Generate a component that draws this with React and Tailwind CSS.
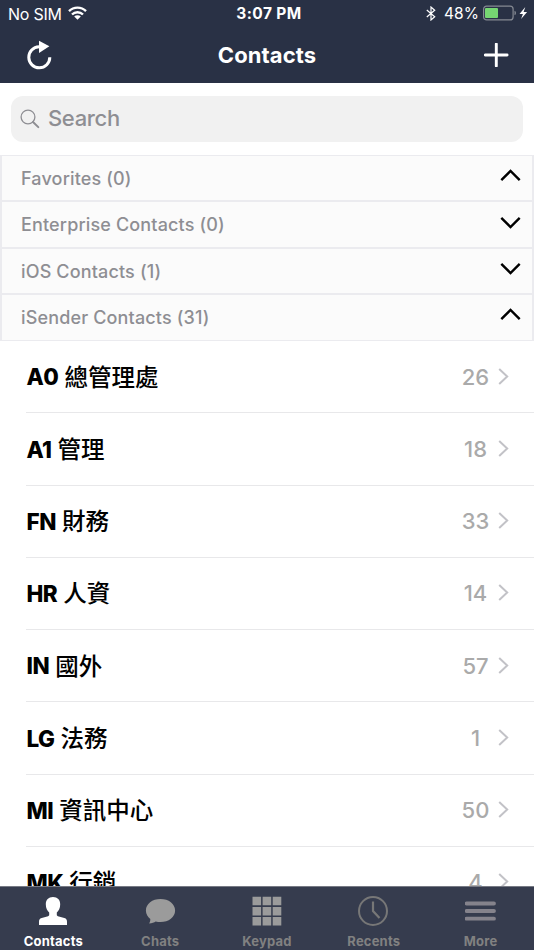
import React, { useState } from "react";

const sections = [
  { name: "Favorites", total: 0, open: true },
  { name: "Enterprise Contacts", total: 0, open: false },
  { name: "iOS Contacts", total: 1, open: false },
  { name: "iSender Contacts", total: 31, open: true },
];

const departments = [
  { code: "A0", name: "總管理處", count: 26 },
  { code: "A1", name: "管理", count: 18 },
  { code: "FN", name: "財務", count: 33 },
  { code: "HR", name: "人資", count: 14 },
  { code: "IN", name: "國外", count: 57 },
  { code: "LG", name: "法務", count: 1 },
  { code: "MI", name: "資訊中心", count: 50 },
  { code: "MK", name: "行銷", count: 4 },
];

const StatusBar = () => (
  <div className="h-7 grid grid-cols-3 items-center text-white text-[16px] leading-7">
    <div className="flex items-center pl-2 -mt-[1px]">
      <span className="w-[54px] whitespace-nowrap tracking-[-0.25px]">No SIM</span>
      <svg width="19" height="14" viewBox="0 0 19 14" className="ml-[6px] -mt-[1px]">
        <g fill="none" stroke="white" strokeWidth="2.4">
          <path d="M1 5.2a12 12 0 0 1 17 0" />
          <path d="M4 8.5a7.8 7.8 0 0 1 11 0" />
        </g>
        <path d="M9.5 13.8 6.2 10.6a4.5 4.5 0 0 1 6.6 0z" fill="white" />
      </svg>
    </div>
    <div className="text-center font-bold tracking-[0.4px] text-[15.5px] pl-[4px]">3:07 PM</div>
    <div className="flex items-center justify-end pr-[6px]">
      <svg width="10" height="15" viewBox="0 0 10 15" className="mr-[8px] -mt-[1px]">
        <path d="M.8 4 8.7 10.8 5 14V1l3.7 3.2L.8 11" fill="none" stroke="white" strokeWidth="1.2" />
      </svg>
      <span className="text-[15.5px] tracking-[0.1px]">48%</span>
      <svg width="45" height="16" viewBox="0 0 45 16" className="ml-[4px] -mt-[2px]">
        <rect x=".6" y="1.1" width="29.5" height="13.8" rx="3" fill="none" stroke="#858992" strokeWidth="1.2" />
        <rect x="2" y="3" width="13" height="10" rx="1" fill="#76d672" />
        <path d="M31.5 5.7q1.5.6 1.5 2.3T31.5 10.3z" fill="#858992" />
        <path d="M42.3 2 36.5 8.9h3.4l-1.8 5.1 6-7h-3.5z" fill="white" />
      </svg>
    </div>
  </div>
);

const NavBar = () => (
  <div className="h-[55px] flex items-center justify-between pl-[26px] pr-[25px] text-white">
    <svg width="27" height="30" viewBox="0 0 27 30" className="-mt-[2px]" aria-label="Refresh">
      <path d="M13 6.8A10.5 10.5 0 1 0 23.8 17.3" fill="none" stroke="white" strokeWidth="3" />
      <path d="M13 .8 23.4 6.3 13 13z" fill="white" />
    </svg>
    <h1 className="text-[22px] font-bold tracking-[0.1px] mr-[3px]">Contacts</h1>
    <svg width="25" height="24" viewBox="0 0 25 24" className="-mt-[2px]" aria-label="Add">
      <path d="M1.3 12h21.8M12.3 1v22" stroke="white" strokeWidth="2.9" strokeLinecap="round" />
    </svg>
  </div>
);

const SearchBox = () => (
  <div className="h-[72px] px-[11px] pt-[13px]">
    <div className="h-[46px] flex items-center rounded-[12px] bg-[#f1f1f1] pl-[9px] text-[#8e8e93]">
      <svg width="20" height="20" viewBox="0 0 20 20">
        <circle cx="8" cy="8" r="6.9" fill="none" stroke="currentColor" strokeWidth="1.3" />
        <path d="m13 13 5.3 5.1" stroke="currentColor" strokeWidth="2" strokeLinecap="round" />
      </svg>
      <span className="ml-2 mb-[1px] text-[22px] font-medium tracking-[-0.35px]">Search</span>
    </div>
  </div>
);

const SectionHeader = ({ section, onToggle }) => (
  <button
    onClick={onToggle}
    className="w-full h-[46.4px] flex items-center justify-between border-x-2 border-y border-[#ebebef] bg-[#fbfbfb] pl-[19px] pr-[11px] cursor-pointer"
  >
    <span className="text-[18px] font-medium text-[#8e8e93] tracking-[0.15px] pt-[0.5px]">
      {section.name} ({section.total})
    </span>
    <svg width="21" height="13" viewBox="0 0 21 13" className="mb-[5px]">
      <path
        d={section.open ? "M1.3 11.2 10.5 2l9.2 9.2" : "M1.3 1.8 10.5 11l9.2-9.2"}
        fill="none"
        stroke="black"
        strokeWidth="2.4"
      />
    </svg>
  </button>
);

const DepartmentRow = ({ department }) => (
  <li className="ml-[26px] h-[72.25px] flex items-center border-b border-[#e8e8ea]">
    <span className="pl-[0.5px] pt-[1px] text-[22.5px] font-extrabold tracking-[-0.5px]">{department.code}</span>
    <span className="-mt-[1px] ml-[6px] text-[23.5px] font-medium font-['Noto_Sans_CJK_TC',sans-serif]">
      {department.name}
    </span>
    <span className="ml-auto mt-[1px] w-[40px] text-center text-[22px] font-medium text-[#aaaaaa]">
      {department.count}
    </span>
    <svg width="11" height="17" viewBox="0 0 11 17" className="ml-[2px] mr-[25.5px] mb-[1px]">
      <path d="m1.2 1 8 7.5-8 7.5" fill="none" stroke="#c2c2c7" strokeWidth="2" />
    </svg>
  </li>
);

const tabs = [
  {
    name: "Contacts",
    icon: (
      <path
        d="M16 2c4.5 0 7.2 3 7.2 7.3 0 3.8-1.5 6.6-3.4 8.2v2.2c0 1 .7 1.3 2 1.7l5.5 1.7c2.2.7 2.7 1.8 2.7 3.7V30H2v-3.2c0-1.9.5-3 2.7-3.7l5.5-1.7c1.3-.4 2-.7 2-1.7v-2.2c-1.9-1.6-3.4-4.4-3.4-8.2C8.8 5 11.5 2 16 2z"
        fill="#ffffff"
      />
    ),
  },
  {
    name: "Chats",
    icon: (
      <path
        d="M16.5 4c8.2 0 14.6 4.8 14.6 11.5S24.7 27 16.5 27c-1.7 0-3.3-.2-4.8-.6-1.5.9-3.7 1.9-6.6 2.2.8-1.5 1.3-2.9 1.2-4.7C3.7 21.8 1.9 18.9 1.9 15.5 1.9 8.8 8.3 4 16.5 4z"
        fill="#9b9b9b"
      />
    ),
  },
  {
    name: "Keypad",
    icon: (
      <path
        d="M1.5 1.7h8.6v8.6H1.5zM11.6 1.7h8.6v8.6h-8.6zM21.7 1.7h8.6v8.6h-8.6zM1.5 11.9h8.6v8.6H1.5zM11.6 11.9h8.6v8.6h-8.6zM21.7 11.9h8.6v8.6h-8.6zM1.5 22h8.6v8.6H1.5zM11.6 22h8.6v8.6h-8.6zM21.7 22h8.6v8.6h-8.6z"
        fill="#9b9b9b"
      />
    ),
  },
  {
    name: "Recents",
    icon: (
      <g fill="none" stroke="#777777">
        <circle cx="15" cy="16" r="14" strokeWidth="2" />
        <path d="M15 6.5V16l6.5 7" strokeWidth="2.2" />
      </g>
    ),
  },
  {
    name: "More",
    icon: <path d="M1.500 8.5h27.5M1.500 16h27.5M1.500 23.7h27.5" stroke="#85838c" strokeWidth="3.8" strokeLinecap="round" />,
  },
];

const TabBar = ({ active, onSelect }) => (
  <nav className="h-16 shrink-0 grid grid-cols-5 bg-[#363c4e] border-t border-[#777a84]">
    {tabs.map((tab) => (
      <button
        key={tab.name}
        onClick={() => onSelect(tab.name)}
        className={`flex flex-col items-center pt-2 cursor-pointer ${
          active === tab.name ? "text-white" : "text-[#818181]"
        }`}
      >
        <svg width="32" height="32" viewBox="0 0 32 32">
          {tab.icon}
        </svg>
        <span className="mt-[6px] text-[13px] leading-4 font-bold tracking-[0.2px]">{tab.name}</span>
      </button>
    ))}
  </nav>
);

const App = () => {
  const [groups, setGroups] = useState(sections);
  const [activeTab, setActiveTab] = useState("Contacts");

  const toggle = (name) => {
    setGroups(groups.map((g) => (g.name === name ? { ...g, open: !g.open } : g)));
  };

  return (
    <div className="w-full h-screen flex flex-col overflow-hidden bg-white font-['Inter','Noto_Sans_CJK_TC',sans-serif]">
      <header className="shrink-0 bg-[#293145]">
        <StatusBar />
        <NavBar />
      </header>
      <main className="flex-1 min-h-0 overflow-hidden">
        <SearchBox />
        {groups.map((group) => (
          <SectionHeader key={group.name} section={group} onToggle={() => toggle(group.name)} />
        ))}
        {groups[3].open && (
          <ul className="pt-[0.5px]">
            {departments.map((department) => (
              <DepartmentRow key={department.code} department={department} />
            ))}
          </ul>
        )}
      </main>
      <TabBar active={activeTab} onSelect={setActiveTab} />
    </div>
  );
};

export default App;
